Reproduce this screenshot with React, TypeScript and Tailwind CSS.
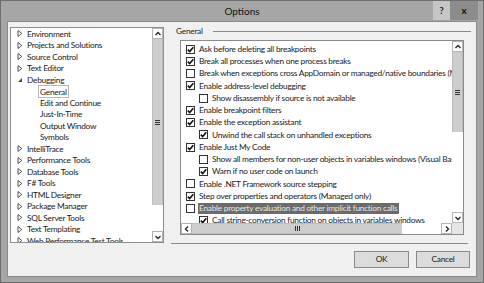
import React from "react";

const font = { fontFamily: 'Lato, "Noto Sans", sans-serif' };

const treeItems: { label: string; level: 0 | 1; arrow?: "closed" | "open"; selected?: boolean }[] = [
  { label: "Environment", level: 0, arrow: "closed" },
  { label: "Projects and Solutions", level: 0, arrow: "closed" },
  { label: "Source Control", level: 0, arrow: "closed" },
  { label: "Text Editor", level: 0, arrow: "closed" },
  { label: "Debugging", level: 0, arrow: "open" },
  { label: "General", level: 1, selected: true },
  { label: "Edit and Continue", level: 1 },
  { label: "Just-In-Time", level: 1 },
  { label: "Output Window", level: 1 },
  { label: "Symbols", level: 1 },
  { label: "IntelliTrace", level: 0, arrow: "closed" },
  { label: "Performance Tools", level: 0, arrow: "closed" },
  { label: "Database Tools", level: 0, arrow: "closed" },
  { label: "F# Tools", level: 0, arrow: "closed" },
  { label: "HTML Designer", level: 0, arrow: "closed" },
  { label: "Package Manager", level: 0, arrow: "closed" },
  { label: "SQL Server Tools", level: 0, arrow: "closed" },
  { label: "Text Templating", level: 0, arrow: "closed" },
  { label: "Web Performance Test Tools", level: 0, arrow: "closed" },
];

const options: { label: string; level: 0 | 1; checked: boolean; highlight?: boolean }[] = [
  { label: "Ask before deleting all breakpoints", level: 0, checked: true },
  { label: "Break all processes when one process breaks", level: 0, checked: true },
  { label: "Break when exceptions cross AppDomain or managed/native boundaries (Managed only)", level: 0, checked: false },
  { label: "Enable address-level debugging", level: 0, checked: true },
  { label: "Show disassembly if source is not available", level: 1, checked: false },
  { label: "Enable breakpoint filters", level: 0, checked: true },
  { label: "Enable the exception assistant", level: 0, checked: true },
  { label: "Unwind the call stack on unhandled exceptions", level: 1, checked: true },
  { label: "Enable Just My Code", level: 0, checked: true },
  { label: "Show all members for non-user objects in variables windows (Visual Basic only)", level: 1, checked: false },
  { label: "Warn if no user code on launch", level: 1, checked: true },
  { label: "Enable .NET Framework source stepping", level: 0, checked: false },
  { label: "Step over properties and operators (Managed only)", level: 0, checked: true },
  { label: "Enable property evaluation and other implicit function calls", level: 0, checked: false, highlight: true },
  { label: "Call string-conversion function on objects in variables windows", level: 1, checked: true },
];

function Arrow({ kind }: { kind: "closed" | "open" }) {
  if (kind === "open") {
    return (
      <svg width="6" height="6" viewBox="0 0 6 6" className="shrink-0">
        <path d="M5 1 L5 5 L1 5 Z" fill="#444" />
      </svg>
    );
  }
  return (
    <svg width="6" height="7" viewBox="0 0 6 7" className="shrink-0">
      <path d="M1 0.5 L4.8 3.5 L1 6.5 Z" fill="none" stroke="#555" strokeWidth="1" />
    </svg>
  );
}

function CheckBox({ checked }: { checked: boolean }) {
  return (
    <div className="w-[9px] h-[9px] border border-[#333] bg-white shrink-0 flex items-center justify-center">
      {checked && (
        <svg width="7" height="7" viewBox="0 0 7 7">
          <path d="M0.8 3.6 L2.7 5.6 L6.3 1.2" fill="none" stroke="#111" strokeWidth="1.6" />
        </svg>
      )}
    </div>
  );
}

function Chevron({ dir }: { dir: "up" | "down" | "left" | "right" }) {
  const d =
    dir === "up"
      ? "M1.5 5 L4 2.5 L6.5 5"
      : dir === "down"
      ? "M1.5 3 L4 5.5 L6.5 3"
      : dir === "left"
      ? "M5 1.5 L2.5 4 L5 6.5"
      : "M3 1.5 L5.5 4 L3 6.5";
  return (
    <svg width="8" height="8" viewBox="0 0 8 8">
      <path d={d} fill="none" stroke="#222" strokeWidth="1.3" />
    </svg>
  );
}

function Grip({ vertical }: { vertical: boolean }) {
  return vertical ? (
    <div className="flex flex-col gap-[1px]">
      <div className="w-[5px] h-[1px] bg-[#333]" />
      <div className="w-[5px] h-[1px] bg-[#333]" />
      <div className="w-[5px] h-[1px] bg-[#333]" />
    </div>
  ) : (
    <div className="flex flex-row gap-[1px]">
      <div className="w-[1px] h-[5px] bg-[#333]" />
      <div className="w-[1px] h-[5px] bg-[#333]" />
      <div className="w-[1px] h-[5px] bg-[#333]" />
    </div>
  );
}

export default function App() {
  return (
    <div className="w-[484px] h-[283px] bg-[#a6a6a6] border border-[#6e6e6e] flex flex-col overflow-hidden" style={font}>
      {/* Title bar */}
      <div className="h-[20px] shrink-0 relative flex items-center justify-center">
        <span className="text-[10px] text-[#111] leading-none">Options</span>
        <div className="absolute right-[5px] top-0 flex h-[19px]">
          <div className="w-[17px] h-full bg-[#c6c6c6] flex items-center justify-center text-[9px] font-bold text-[#222]">?</div>
          <div className="w-[28px] h-full bg-[#8c8c8c] flex items-center justify-center text-[10px] font-bold text-[#111]">x</div>
        </div>
      </div>
      {/* Client */}
      <div className="mx-[6px] mb-[5px] flex-1 bg-[#f0f0f0] border border-[#8a8a8a] flex flex-col text-[8.3px] tracking-[-0.25px] text-[#1a1a1a] leading-none">
        <div className="flex mt-[5px]">
          {/* Tree */}
          <div className="ml-[2px] w-[154px] h-[216px] bg-white border border-[#8e8e8e] flex overflow-hidden">
            <div className="flex-1 overflow-hidden">
              {treeItems.map((t) => (
                <div key={t.label} className="h-[11.5px] flex items-center whitespace-nowrap">
                  {t.level === 0 ? (
                    <div className="flex items-center pl-[6px]">
                      <div className="w-[10px] flex items-center">{t.arrow && <Arrow kind={t.arrow} />}</div>
                      <span>{t.label}</span>
                    </div>
                  ) : (
                    <div className="pl-[27px]">
                      <span className={t.selected ? "border border-[#b8b8b8] px-[1px] py-[0.5px]" : "px-[2px]"}>{t.label}</span>
                    </div>
                  )}
                </div>
              ))}
            </div>
            {/* vertical scrollbar */}
            <div className="w-[11px] h-full flex flex-col bg-white">
              <div className="h-[11px] flex items-center justify-center border border-[#b5b5b5] bg-white">
                <Chevron dir="up" />
              </div>
              <div className="h-[166px] bg-[#cdcdcd] border-x border-[#bdbdbd] flex items-center justify-center">
                <Grip vertical />
              </div>
              <div className="flex-1 bg-white" />
              <div className="h-[11px] flex items-center justify-center border border-[#b5b5b5] bg-white">
                <Chevron dir="down" />
              </div>
            </div>
          </div>
          {/* Right panel */}
          <div className="ml-[6px] flex-1 flex flex-col">
            <div className="flex items-center h-[9px]">
              <span className="text-[#222] ml-[6px]">General</span>
              <div className="flex-1 h-[1px] bg-[#8a8a8a] ml-[10px] mr-[5px]" />
            </div>
            <div className="mt-[4px] ml-[10px] w-[284px] h-[195px] bg-white border border-[#8a8a8a] flex flex-col overflow-hidden">
              <div className="flex flex-1 min-h-0">
                <div className="flex-1 pt-[2px] overflow-hidden">
                  {options.map((o) => (
                    <div
                      key={o.label}
                      className={`h-[12.25px] flex items-center whitespace-nowrap ${o.level === 0 ? "pl-[5px]" : "pl-[18px]"}`}
                    >
                      <CheckBox checked={o.checked} />
                      <span
                        className={
                          o.highlight
                            ? "ml-[3px] pl-[1px] pr-[2px] h-[11px] flex items-center bg-[#6b6b6b] text-[#e6e6e6]"
                            : "ml-[4px]"
                        }
                      >
                        {o.label}
                      </span>
                    </div>
                  ))}
                </div>
                {/* vertical scrollbar */}
                <div className="w-[11px] flex flex-col bg-white shrink-0">
                  <div className="h-[11px] flex items-center justify-center border border-[#b5b5b5] bg-white">
                    <Chevron dir="up" />
                  </div>
                  <div className="h-[80px] bg-[#cdcdcd] border-x border-[#bdbdbd] flex items-center justify-center">
                    <Grip vertical />
                  </div>
                  <div className="flex-1 bg-white" />
                  <div className="h-[11px] flex items-center justify-center border border-[#b5b5b5] bg-white">
                    <Chevron dir="down" />
                  </div>
                </div>
              </div>
              {/* horizontal scrollbar */}
              <div className="h-[11px] flex shrink-0">
                <div className="w-[11px] flex items-center justify-center border border-[#b5b5b5] bg-white">
                  <Chevron dir="left" />
                </div>
                <div className="w-[210px] bg-[#cdcdcd] border-y border-[#bdbdbd] flex items-center justify-center">
                  <Grip vertical={false} />
                </div>
                <div className="flex-1 bg-white" />
                <div className="w-[11px] flex items-center justify-center border border-[#b5b5b5] bg-white">
                  <Chevron dir="right" />
                </div>
                <div className="w-[11px] bg-[#e6e6e6]" />
              </div>
            </div>
          </div>
        </div>
        {/* separator */}
        <div className="ml-[163px] mr-[8px] h-[1px] bg-[#8a8a8a]" />
        {/* buttons */}
        <div className="flex justify-end gap-[7px] mr-[6px] mt-[7px]">
          <div className="w-[55px] h-[17px] bg-[#dcdcdc] border border-[#8a8a8a] flex items-center justify-center">OK</div>
          <div className="w-[54px] h-[17px] bg-[#dcdcdc] border border-[#8a8a8a] flex items-center justify-center">Cancel</div>
        </div>
      </div>
    </div>
  );
}
